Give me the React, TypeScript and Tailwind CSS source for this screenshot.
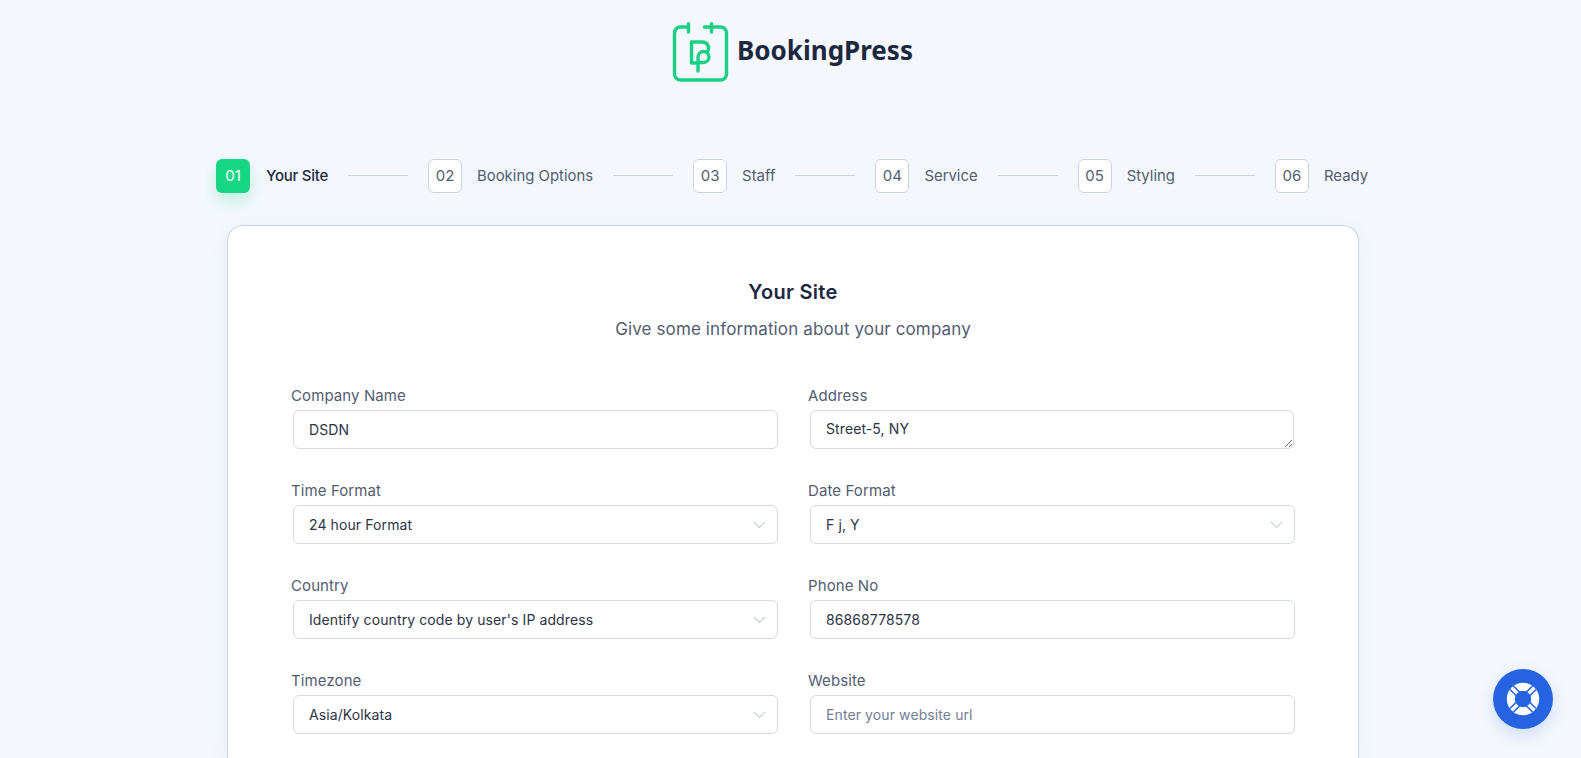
import React from "react";

function Logo() {
  return (
    <svg width="57" height="60" viewBox="0 0 56 60" fill="none" stroke="#1bd085" strokeWidth="3.4" strokeLinecap="round" strokeLinejoin="round">
      <path d="M16 5H8a6 6 0 0 0-6 6v41a6 6 0 0 0 6 6h40a6 6 0 0 0 6-6V11a6 6 0 0 0-6-6H32" />
      <path d="M16 1.7V10M39 1.7V10" />
      <path d="M19 20H30a6 6 0 0 1 4.5 10" />
      <path d="M19 20V41H25.5" />
      <path d="M25.5 49V35a5.5 5.5 0 1 1 5.5 5.5H25.5" />
    </svg>
  );
}

const steps = [
  ["01", "Your Site"],
  ["02", "Booking Options"],
  ["03", "Staff"],
  ["04", "Service"],
  ["05", "Styling"],
  ["06", "Ready"],
];

function Field({ label, children }: { label: string; children: React.ReactNode }) {
  return (
    <div className="flex flex-col">
      <label className="text-[15px] leading-[20px] tracking-[0.1px] text-[#535d71] mb-[4px]">{label}</label>
      <div className="pl-[2px]">{children}</div>
    </div>
  );
}

const boxCls =
  "h-[39px] w-full rounded-[6px] border border-[#d5d9e2] bg-white px-[15px] flex items-center justify-between text-[14px] tracking-[0.1px] text-[#2c3446]";

function Input({ value, placeholder }: { value?: string; placeholder?: string }) {
  return (
    <input
      readOnly
      value={value}
      placeholder={placeholder}
      className={boxCls + " outline-none placeholder:text-[#727e95]"}
    />
  );
}

function Select({ value }: { value: string }) {
  return (
    <div className={boxCls}>
      <span>{value}</span>
      <svg width="13" height="8" viewBox="0 0 13 8" fill="none" stroke="#c9cdd6" strokeWidth="1.2" className="mr-[-4px]">
        <path d="M0.8 0.8 6.5 6.5l5.7-5.7" />
      </svg>
    </div>
  );
}

export default function App() {
  return (
    <div
      className="h-[758px] overflow-hidden bg-[#f4f8fc] flex flex-col"
      style={{ fontFamily: '"Inter", "Liberation Sans", sans-serif' }}
    >
      <header className="flex justify-center items-center gap-[8px] pt-[20px] pl-[4px] h-[83px]">
        <Logo />
        <span
          className="text-[26px] font-bold text-[#1d2840] mb-[2px]"
          style={{ fontFamily: '"Noto Sans", sans-serif' }}
        >
          BookingPress
        </span>
      </header>

      <nav className="mt-[76px] pl-[216px] flex items-center text-[15px] text-[#535d71]">
        {steps.map(([n, label], i) => (
          <React.Fragment key={n}>
            <div
              className={
                i === 0
                  ? "w-[34px] h-[34px] rounded-[6px] bg-[#16d685] text-white flex items-center justify-center shadow-[0_8px_16px_rgba(22,214,133,0.22)]"
                  : "w-[34px] h-[34px] rounded-[6px] bg-white border border-[#ccd3e0] flex items-center justify-center"
              }
            >
              {n}
            </div>
            <span className={i === 0 ? "ml-[16px] text-[#1d2840] font-medium tracking-[-0.25px]" : "ml-[15px] text-[14.9px]"}>{label}</span>
            {i < 5 && <span className="w-[60px] h-px bg-[#ccd3e0] mx-[20px] mb-[1px]" />}
          </React.Fragment>
        ))}
      </nav>

      <main className="ml-[227px] mt-[32px] w-[1132px] flex-1 rounded-t-[16px] border border-b-0 border-[#ccd3e0] bg-white shadow-[0_4px_16px_rgba(136,150,171,0.1)] pl-[63px] pt-[52px]">
        <div className="w-[1004px]">
          <h1 className="text-center text-[20px] leading-[28px] font-semibold tracking-[0.3px] text-[#1d2840]">Your Site</h1>
          <p className="text-center text-[17px] leading-[24px] tracking-[0.12px] text-[#535d71] mt-[11px]">Give some information about your company</p>
        </div>
        <div className="grid grid-cols-2 gap-x-[30px] gap-y-[32px] mt-[45px] w-[1004px]">
          <Field label="Company Name"><Input value="DSDN" /></Field>
          <Field label="Address">
            <textarea
              readOnly
              value="Street-5, NY"
              className="block h-[39px] w-[484px] rounded-[6px] border border-[#d5d9e2] bg-white px-[15px] py-[8px] text-[14px] leading-[20px] tracking-[0.1px] text-[#2c3446] outline-none"
            />
          </Field>
          <Field label="Time Format"><Select value="24 hour Format" /></Field>
          <Field label="Date Format"><Select value="F j, Y" /></Field>
          <Field label="Country"><Select value="Identify country code by user's IP address" /></Field>
          <Field label="Phone No"><Input value="86868778578" /></Field>
          <Field label="Timezone"><Select value="Asia/Kolkata" /></Field>
          <Field label="Website"><Input placeholder="Enter your website url" /></Field>
        </div>
      </main>

      <button className="fixed left-[1493px] top-[669px] w-[60px] h-[60px] rounded-full bg-[#2563e0] flex items-center justify-center shadow-[0_6px_16px_rgba(37,99,224,0.18)]">
        <svg width="34" height="34" viewBox="0 0 34 34">
          <circle cx="17" cy="17" r="12.2" fill="none" stroke="#fff" strokeWidth="8" />
          <g stroke="#2563e0" strokeWidth="1.6">
            <path d="M4 7.5 13 16.5M7.5 4 16.5 13" />
            <path d="M30 7.5 21 16.5M26.5 4 17.5 13" />
            <path d="M4 26.5 13 17.5M7.5 30 16.5 21" />
            <path d="M30 26.5 21 17.5M26.5 30 17.5 21" />
          </g>
        </svg>
      </button>
    </div>
  );
}
